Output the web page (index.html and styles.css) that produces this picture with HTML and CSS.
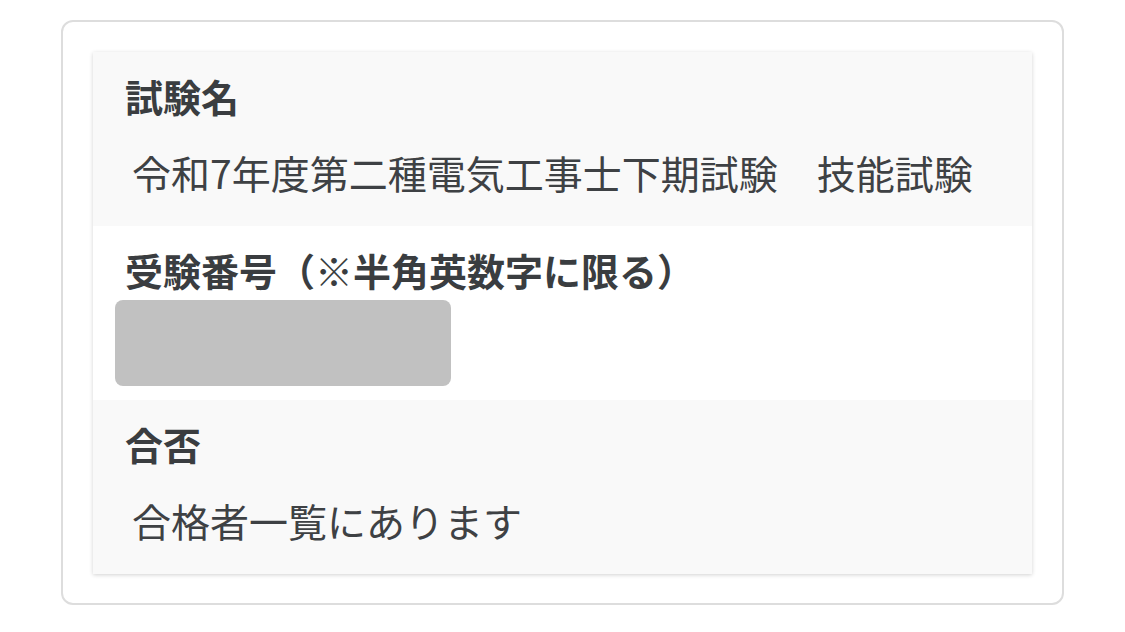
FILE: index.html
```html
<!DOCTYPE html>
<html lang="ja">
<head>
<meta charset="utf-8">
<link rel="stylesheet" href="styles.css">
</head>
<body>
<div class="page">
  <div class="frame">
    <div class="card">
      <div class="row shaded">
        <div class="label">試験名</div>
        <div class="value">令和7年度第二種電気工事士下期試験　技能試験</div>
      </div>
      <div class="row">
        <div class="label">受験番号（※半角英数字に限る）</div>
        <div class="masked"></div>
      </div>
      <div class="row shaded">
        <div class="label">合否</div>
        <div class="value">合格者一覧にあります</div>
      </div>
    </div>
  </div>
</div>
</body>
</html>
```

FILE: styles.css
```css
html, body {
  margin: 0;
  padding: 0;
  background: #ffffff;
}
body {
  font-family: "Noto Sans CJK JP", "Noto Sans", sans-serif;
  color: #3b3e41;
}
.page {
  padding: 20px 0 0 61px;
}
.frame {
  width: 1003px;
  box-sizing: border-box;
  border: 2px solid #dddddd;
  border-radius: 12px;
  padding: 30px 30px 29px 30px;
}
.card {
  background: #ffffff;
  box-shadow: 0 1px 4px rgba(0, 0, 0, 0.18);
}
.row {
  display: flex;
  flex-direction: column;
  align-items: flex-start;
  padding: 18px 32px 14px 32px;
  height: 174px;
  box-sizing: border-box;
}
.row.shaded {
  background: #f9f9f9;
}
.label {
  font-size: 38px;
  font-weight: 700;
  line-height: 52px;
  color: #3a3d40;
}
.value {
  font-size: 39px;
  font-weight: 400;
  line-height: 60px;
  margin-top: 20px;
  margin-left: 7px;
  color: #3e4144;
}
.masked {
  width: 336px;
  height: 86px;
  margin-top: 4px;
  margin-left: -10px;
  background: #c1c1c1;
  border-radius: 8px;
}
```
